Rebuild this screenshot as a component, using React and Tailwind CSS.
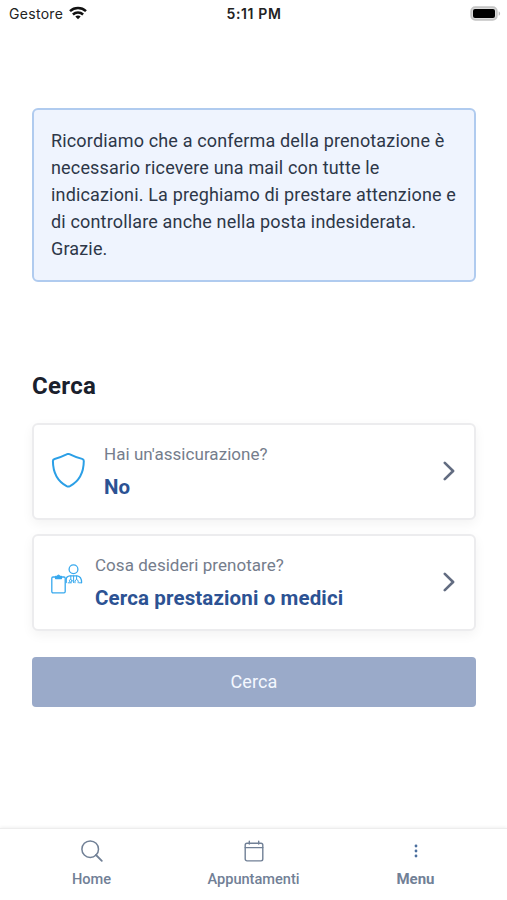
import React from "react";

const WifiIcon = () => (
  <svg width="18" height="14" viewBox="0 0 18 14" fill="none" stroke="#111" strokeWidth="2.5">
    <path d="M1 5.1C5.5.9 12.5.9 17 5.1" />
    <path d="M3.9 8.5C6.8 5.9 11.2 5.9 14.1 8.5" />
    <path d="M6.3 10.5C7.8 9.2 10.2 9.2 11.7 10.5L9 13.3Z" fill="#111" stroke="none" />
  </svg>
);

const BatteryIcon = () => (
  <svg width="31" height="15" viewBox="0 0 31 15" fill="none">
    <rect x="1.2" y="1.2" width="25.6" height="12.6" rx="4" fill="#ddd" stroke="#c4c4c4" strokeWidth="1.8" />
    <rect x="3" y="3" width="22" height="9" rx="2" fill="#000" />
    <path d="M28.7 5.2C30.6 6 30.6 9 28.7 9.8Z" fill="#b9b9b9" />
  </svg>
);

const ShieldIcon = () => (
  <svg width="34" height="36" viewBox="0 0 34 36" fill="none" stroke="#2b9fe6" strokeWidth="2" strokeLinejoin="round">
    <path d="M16.2 1.2C12.2 3.2 8 4.9 3.6 5.9Q1.9 6.3 1.9 8.1C2 19.2 6.5 28.3 15.6 33.2Q17.3 34 19 33.2C28.1 28.3 32.7 19.2 32.8 8.1Q32.8 6.3 31.1 5.9C26.7 4.9 22.4 3.2 18.4 1.2Q17.3 .7 16.2 1.2Z" />
  </svg>
);

const DoctorIcon = () => (
  <svg width="32" height="36" viewBox="0 0 32 36" fill="none" stroke="#38a9ee" strokeWidth="1.3" strokeLinecap="round" strokeLinejoin="round">
    <rect x="0.8" y="13" width="13.4" height="15.8" rx="1.2" />
    <path d="M4.6 14.5V12.4H6.3Q7.5 9.9 8.7 12.4H10.4V14.5Z" fill="#38a9ee" />
    <circle cx="22.5" cy="5.3" r="4.4" />
    <path d="M15.2 18.6V15.5Q15.2 12.2 19 11.8H26Q30.6 12.2 30.6 18.6" />
    <path d="M19.8 12V15.2M25.6 12V15.2M22.6 12V18.6" strokeWidth="1" />
    <circle cx="19.7" cy="16.8" r="1.3" strokeWidth="1" />
    <path d="M24 18.8V17.1Q25.6 13.6 27.2 17.1V18.8M17.2 18.8H20.4M28.3 18.8H30.6" strokeWidth="1" />
  </svg>
);

const ChevronIcon = () => (
  <svg width="12" height="20" viewBox="0 0 12 20" fill="none" stroke="#626c81" strokeWidth="2.6" strokeLinecap="round" strokeLinejoin="round">
    <path d="M1.8 1.8L10.1 10L1.8 18.2" />
  </svg>
);

const SearchIcon = () => (
  <svg width="22" height="22" viewBox="0 0 22 22" fill="none" stroke="#718096" strokeWidth="1.5" strokeLinecap="round">
    <circle cx="9.2" cy="9.2" r="8.3" />
    <path d="M15 15L20.8 20.8" strokeWidth="1.8" />
  </svg>
);

const CalendarIcon = () => (
  <svg width="20" height="22" viewBox="0 0 20 22" fill="none" stroke="#718096" strokeWidth="1.4" strokeLinecap="round">
    <rect x="1.2" y="3.3" width="17.6" height="17.6" rx="1.8" />
    <path d="M1.2 7.6H18.8M5.3 1.2V4M14.7 1.2V4" />
  </svg>
);

const MenuIcon = () => (
  <svg width="4" height="14" viewBox="0 0 4 14" fill="#4b6f9e">
    <circle cx="2" cy="2" r="1.4" />
    <circle cx="2" cy="7" r="1.4" />
    <circle cx="2" cy="12" r="1.4" />
  </svg>
);

const SearchCard = ({ icon, label, value, gap }) => (
  <button
    className={`flex h-[97px] w-full items-center rounded-md border-2 border-[#ececee] bg-white pr-[19px] pb-[2px] pl-[17px] text-left shadow-[0_4px_12px_rgba(0,0,0,0.05)] ${gap}`}
  >
    {icon}
    <span className="flex flex-1 flex-col">
      <span className="text-[17px] leading-[33px] tracking-[0.04px] text-[#757d8c]">{label}</span>
      <span className="text-[20.5px] leading-[33px] font-bold tracking-[0.13px] text-[#2c5293]">{value}</span>
    </span>
    <ChevronIcon />
  </button>
);

const tabs = [
  { name: "Home", icon: <SearchIcon />, style: "text-[14.6px] font-medium" },
  { name: "Appuntamenti", icon: <CalendarIcon />, style: "text-[14.6px] font-medium" },
  { name: "Menu", icon: <MenuIcon />, style: "text-[15px] font-bold" },
];

const App = () => {
  return (
    <div className="flex h-[900px] w-[507px] flex-col overflow-hidden bg-white font-[Roboto,sans-serif]">
      <header className="grid h-7 grid-cols-3 items-center pr-[6px] pl-[9px] font-[Inter,sans-serif] text-[14px] text-[#222]">
        <div className="flex items-center gap-[6px] pb-[2px]">
          <span className="tracking-[0.3px]">Gestore</span>
          <WifiIcon />
        </div>
        <span className="pr-[2px] pb-px text-center font-semibold tracking-[0.65px]">5:11 PM</span>
        <div className="flex justify-end pb-[2px]">
          <BatteryIcon />
        </div>
      </header>

      <main className="flex-1 px-8 pt-20">
        <div className="h-[174px] w-[444px] rounded-md border-2 border-[#b0cbef] bg-[#eff4fe] pt-[17px] pl-[17px] text-[18px] leading-[27px] tracking-[0.16px] whitespace-nowrap text-[#2d3748]">
          Ricordiamo che a conferma della prenotazione è
          <br />
          necessario ricevere una mail con tutte le
          <br />
          indicazioni. La preghiamo di prestare attenzione e
          <br />
          di controllare anche nella posta indesiderata.
          <br />
          Grazie.
        </div>

        <h1 className="mt-[86px] text-[24px] leading-9 font-bold tracking-[0.3px] text-[#1a202c]">Cerca</h1>

        <div className="mt-[19px] flex w-[444px] flex-col gap-[14px]">
          <SearchCard icon={<ShieldIcon />} label="Hai un'assicurazione?" value="No" gap="gap-[19px]" />
          <SearchCard icon={<DoctorIcon />} label="Cosa desideri prenotare?" value="Cerca prestazioni o medici" gap="gap-[12px]" />
        </div>

        <button className="mt-[26px] h-[50px] w-[444px] rounded-[4px] bg-[#9aaac9] pb-px text-[18px] tracking-[0.1px] text-[#f4f8ff]">
          Cerca
        </button>
      </main>

      <nav className="flex h-[72px] justify-center border-t border-[#ededed] pt-[11px] shadow-[0_-1px_3px_rgba(0,0,0,0.06)]">
        {tabs.map((tab) => (
          <div key={tab.name} className="flex w-[162px] flex-col items-center">
            <div className="flex h-[22px] items-center">{tab.icon}</div>
            <span className={`mt-[6px] leading-[22px] text-[#718096] ${tab.style}`}>{tab.name}</span>
          </div>
        ))}
      </nav>
    </div>
  );
};

export default App;
